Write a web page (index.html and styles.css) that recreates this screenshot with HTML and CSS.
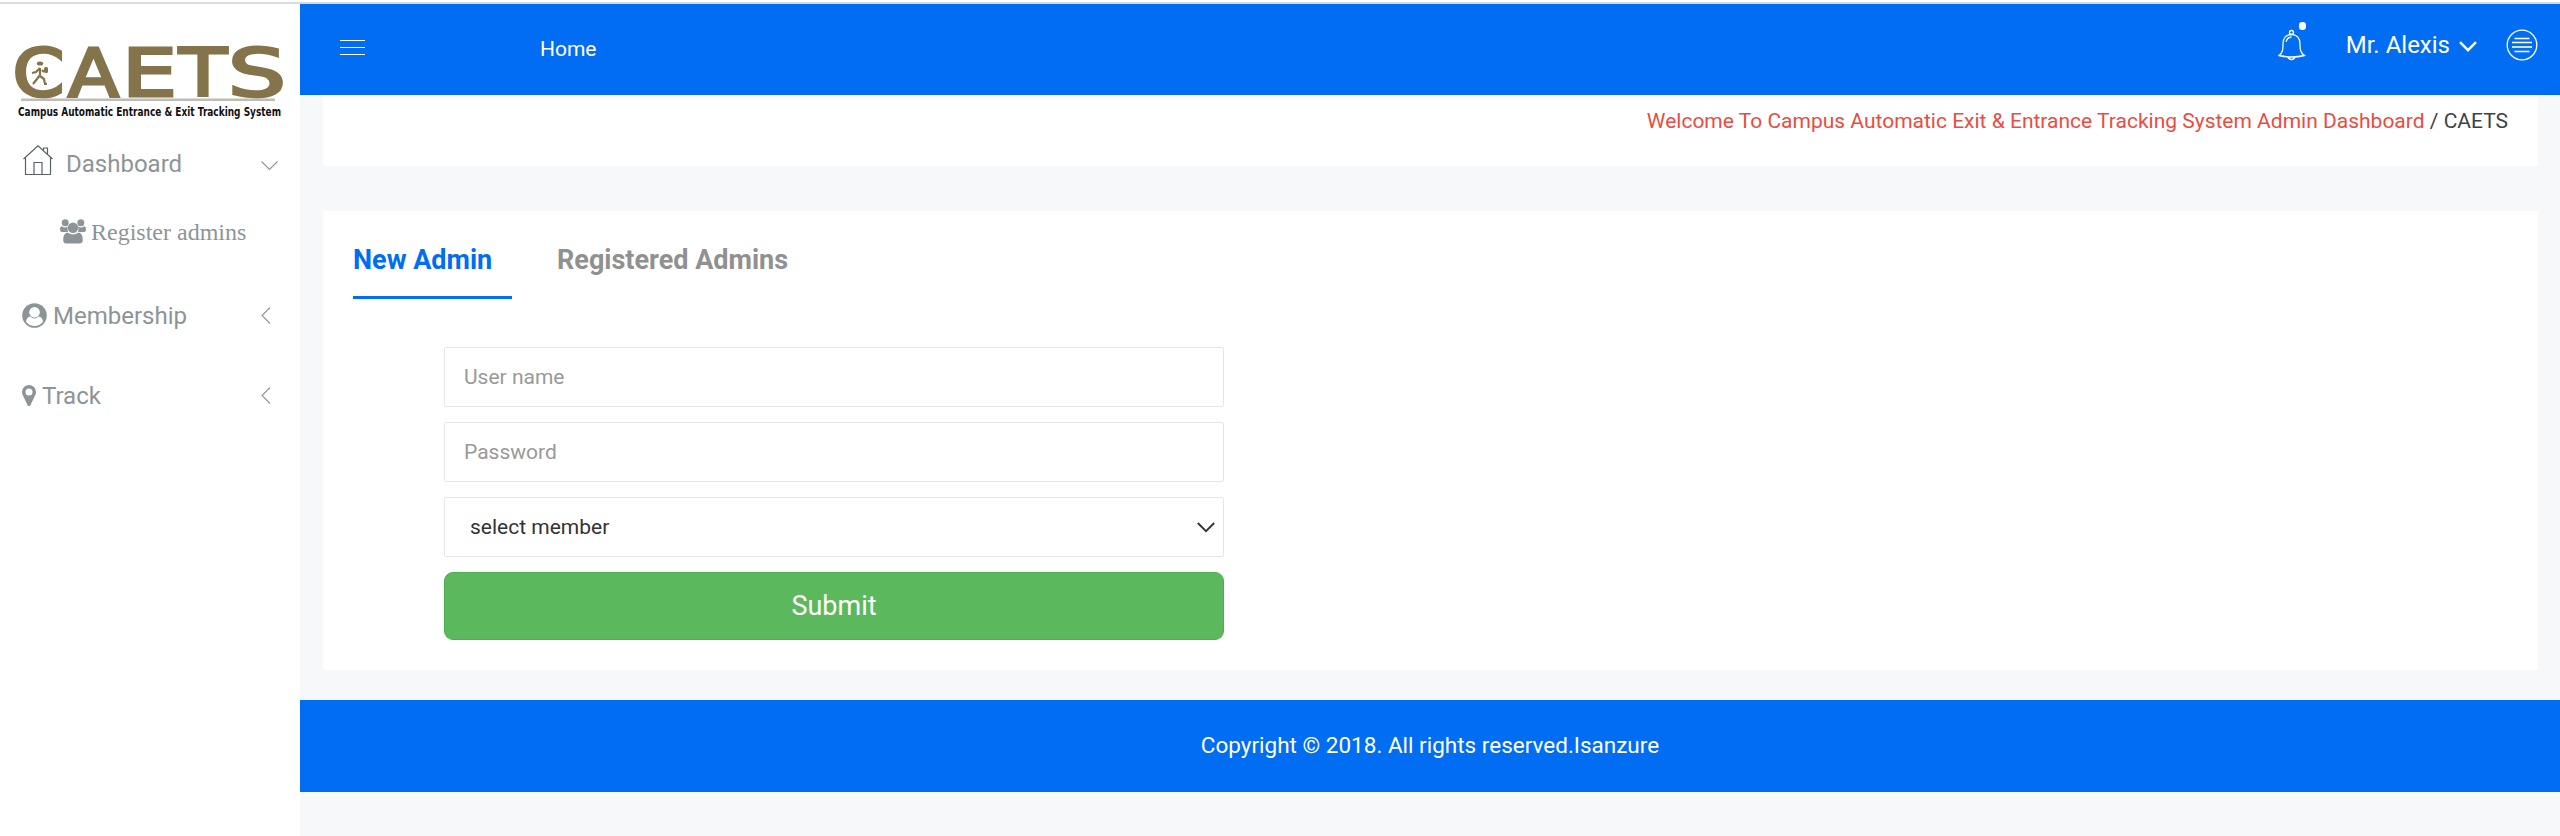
FILE: index.html
```html
<!DOCTYPE html>
<html lang="en">
<head>
<meta charset="utf-8">
<title>CAETS</title>
<link rel="stylesheet" href="styles.css">
</head>
<body>
<aside class="sidebar">
  <svg class="logo" width="300" height="130" viewBox="0 0 300 130" role="img" aria-label="CAETS">
    <g class="wordmark">
      <text x="12.500" y="95.500" textLength="52" lengthAdjust="spacingAndGlyphs">C</text>
      <text x="68" y="95.500" textLength="51" lengthAdjust="spacingAndGlyphs">A</text>
      <text x="122" y="95.500" textLength="55" lengthAdjust="spacingAndGlyphs">E</text>
      <text x="179" y="95.500" textLength="48" lengthAdjust="spacingAndGlyphs">T</text>
      <text x="228" y="95.500" textLength="58" lengthAdjust="spacingAndGlyphs">S</text>
    </g>
    <g class="runner">
      <ellipse cx="40" cy="63.500" rx="3.200" ry="2"/>
      <rect x="44" y="67" width="4" height="6" rx="1.500"/>
      <path d="M40 68v7M40 68l-4 4-4 1M42 70l2 2M40 75l-3 4-4 5M40 76l4 3 1 5h2"/>
    </g>
    <path d="M21 99.700H275" stroke="#bcbcb9" stroke-width="2.500"/>
    <text class="tagline" x="18" y="115.500" textLength="263" lengthAdjust="spacingAndGlyphs">Campus Automatic Entrance &amp; Exit Tracking System</text>
  </svg>
  <nav class="menu">
    <a class="item dash">
      <svg width="30" height="31" viewBox="0 0 30 31" fill="none" stroke="#596266" stroke-width="1.200"><path d="M.5 14L15 .8 29.500 14M2.500 12.500V29.500H27.500V12.500M11 29.500V17.500h8v12M20.500 5V3h4v6"/></svg>
      <span>Dashboard</span>
      <svg class="arrow" width="17" height="10" viewBox="0 0 17 10"><path d="M.5.500l8 8 8-8"/></svg>
    </a>
    <a class="item sub">
      <svg width="26" height="25" viewBox="0 0 26 25" fill="#8d9498"><circle cx="5.200" cy="3.700" r="3.500"/><circle cx="20.800" cy="3.700" r="3.500"/><path d="M1.700 7.200Q5 9.500 8 7.500A7 7 0 0 0 8 13H2Q0 13 0 11 0 7.500 1.700 7.200ZM24.300 7.200Q21 9.500 18 7.500A7 7 0 0 1 18 13h6Q26 13 26 11 26 7.500 24.300 7.200Z"/><circle cx="13" cy="8.800" r="5.200"/><path d="M7.500 13.500Q13 17.500 18.500 13.500 22.800 14 22.800 21 22.800 24.500 19.500 24.500H6.500Q3.200 24.500 3.200 21 3.200 14 7.500 13.500Z"/></svg>
      <span>Register admins</span>
    </a>
    <a class="item member">
      <svg width="25" height="25" viewBox="0 0 25 25"><circle cx="12.500" cy="12.500" r="12.300" fill="#8d9498"/><path d="M8.300 13.500Q12.500 17.500 16.700 13.500 20.300 14 21 18.700A10.500 10.500 0 0 1 4 18.700Q4.700 14 8.300 13.500Z" fill="#fff"/><circle cx="12.500" cy="9.300" r="5.300" fill="#fff"/></svg>
      <span>Membership</span>
      <svg class="arrow" width="10" height="17" viewBox="0 0 10 17"><path d="M9 .500l-8 8 8 8"/></svg>
    </a>
    <a class="item track">
      <svg width="14" height="21" viewBox="0 0 14 21"><path d="M7 0a7 7 0 0 1 7 7c0 1.200-.3 2.200-.7 3L8.400 20.200a1.500 1.500 0 0 1-2.800 0L.7 10C.3 9.200 0 8.200 0 7a7 7 0 0 1 7-7Zm0 3.500a3.500 3.500 0 1 0 0 7 3.500 3.500 0 0 0 0-7Z" fill="#8d9498" fill-rule="evenodd"/></svg>
      <span>Track</span>
      <svg class="arrow" width="10" height="17" viewBox="0 0 10 17"><path d="M9 .500l-8 8 8 8"/></svg>
    </a>
  </nav>
</aside>
<div class="main">
  <header class="topbar">
    <svg class="burger" width="25" height="15" viewBox="0 0 25 15"><path d="M0 .500h25M0 7.500h25M0 14.500h25" stroke="#fff"/></svg>
    <a class="home">Home</a>
    <svg class="bell" width="28" height="40" viewBox="0 0 28 40" fill="none" stroke="#fff" stroke-width="1.300"><circle cx="13.500" cy="10.500" r="2"/><path d="M1 33.500C5 30.500 5 27 5 22c0-6 3.500-9.500 8.500-9.500s8.500 3.500 8.500 9.500c0 5 0 8.500 4.500 11.500Q14 36.500 1 33.500ZM9.500 35q4 5 8 0M8 20q.8-4.500 5.500-5"/><rect x="21" y="0" width="7" height="8" rx="3.200" fill="#fff" stroke="none"/></svg>
    <span class="user">Mr. Alexis</span>
    <svg class="caret" width="18" height="11" viewBox="0 0 18 11" fill="none" stroke="#fff" stroke-width="2.400"><path d="M1 1.200l8 8 8-8"/></svg>
    <svg class="lines" width="32" height="32" viewBox="0 0 32 32" fill="none" stroke="#fff" stroke-width="1.300"><circle cx="16" cy="16" r="14.800"/><path d="M8.500 9.500h15M6 13.500h20M8.500 22.500h15"/><path d="M6 18h20" stroke-width="1.600"/></svg>
  </header>
  <section class="crumbs"><p><a>Welcome To Campus Automatic Exit &amp; Entrance Tracking System Admin Dashboard</a><span class="here"> / CAETS</span></p></section>
  <section class="card">
    <div class="tabs">
      <a class="tab active">New Admin</a>
      <a class="tab">Registered Admins</a>
    </div>
    <form class="form">
      <input type="text" placeholder="User name">
      <input type="password" placeholder="Password">
      <div class="select"><span>select member</span><svg width="18" height="11" viewBox="0 0 18 11" fill="none" stroke="#333" stroke-width="1.900"><path d="M.8 1l8.200 8.200L17.200 1"/></svg></div>
      <button type="button">Submit</button>
    </form>
  </section>
  <footer class="footer">Copyright © 2018. All rights reserved.Isanzure</footer>
</div>
</body>
</html>
```
FILE: styles.css
```css
* { box-sizing: border-box; }
html { background: #fff; }
body {
  margin: 0;
  height: 836px;
  display: grid;
  grid-template-columns: 300px 1fr;
  font-family: Roboto, "Liberation Sans", sans-serif;
  font-size: 21px;
  overflow: hidden;
  background: linear-gradient(#fff 2px, #d9dbe1 2px, #d9dbe1 4px, #f6f8fa 4px);
}
.sidebar { margin-top: 4px; background: #fff; }
.logo { display: block; margin-top: -4px; }
.wordmark {
  font: 65px "DejaVu Sans", sans-serif;
  fill: #85744b;
  stroke: #85744b;
  stroke-width: 2.800px;
}
.runner { fill: #85744b; }
.runner path { fill: none; stroke: #85744b; stroke-width: 2.200px; }
.tagline { font: bold 11.500px "DejaVu Sans", sans-serif; fill: #111; }
.menu { color: #8d9498; font-size: 24px; }
.item { display: flex; align-items: center; }
.item span { line-height: 30px; }
.arrow { margin-left: auto; fill: none; stroke: #8d9498; stroke-width: 1.100px; }
.dash { height: 66px; padding: 0 22px 0 23px; }
.dash > svg:first-child { margin-top: -5px; margin-right: 13px; }
.dash span { margin-top: 2px; }
.dash .arrow { margin-top: 6px; }
.sub { height: 72px; padding-left: 60px; font-family: "Liberation Serif", serif; }
.sub > svg { margin-right: 5px; margin-top: -1px; }
.sub span { margin-top: 0; }
.member { height: 94px; padding: 0 29px 0 22px; }
.member > svg:first-child { margin-right: 6px; }
.member span, .track span { margin-top: 2px; }
.member .arrow, .track .arrow { margin-top: 1px; }
.track { height: 66px; padding: 0 29px 0 22px; }
.track > svg:first-child { margin-right: 6px; }
.main { margin-top: 4px; display: flex; flex-direction: column; }
.topbar {
  height: 91px;
  flex: none;
  display: flex;
  align-items: flex-start;
  padding: 0 22px 0 40px;
  background: #006df2;
  color: #fff;
}
.burger { margin-top: 36px; }
.home { margin: 33px 0 0 175px; line-height: 24px; }
.bell { margin: 18px 40px 0 auto; }
.user { margin-top: 26px; font-size: 24px; line-height: 30px; }
.caret { margin: 37px 29px 0 9px; }
.lines { margin-top: 25px; }
.crumbs {
  height: 71px;
  flex: none;
  margin: 0 22px 0 23px;
  padding: 14px 30px 0 0;
  background: #fff;
  text-align: right;
}
.crumbs p { margin: 0; line-height: 24px; color: #3f4245; }
.crumbs a { color: #ea4c42; }
.card {
  height: 459px;
  flex: none;
  margin: 45px 22px 30px 23px;
  padding: 28px 30px 0;
  background: #fff;
}
.tabs { display: flex; gap: 45px; height: 60px; }
.tab { height: 60px; font-size: 27px; font-weight: 700; line-height: 42px; color: #909090; }
.tab.active { width: 159px; color: #006df2; border-bottom: 3px solid #006df2; }
.form { display: grid; gap: 15px; width: 780px; margin: 48px 0 0 91px; }
.form input, .select {
  width: 100%;
  height: 60px;
  padding: 0 19px;
  border: 1px solid #e5e6e7;
  border-radius: 2px;
  background: #fff;
  color: #333;
  font: 21px Roboto, sans-serif;
}
.form input::placeholder { color: #999; opacity: 1; }
.select { display: flex; align-items: center; justify-content: space-between; padding: 0 8px 0 25px; }
.form button {
  height: 68px;
  border: 1px solid #4cae4c;
  border-radius: 9px;
  background: #5cb85c;
  color: #fff;
  font: 27px Roboto, sans-serif;
}
.footer {
  height: 92px;
  flex: none;
  background: #006df2;
  color: #fff;
  font-size: 22.500px;
  line-height: 90px;
  text-align: center;
}
```
